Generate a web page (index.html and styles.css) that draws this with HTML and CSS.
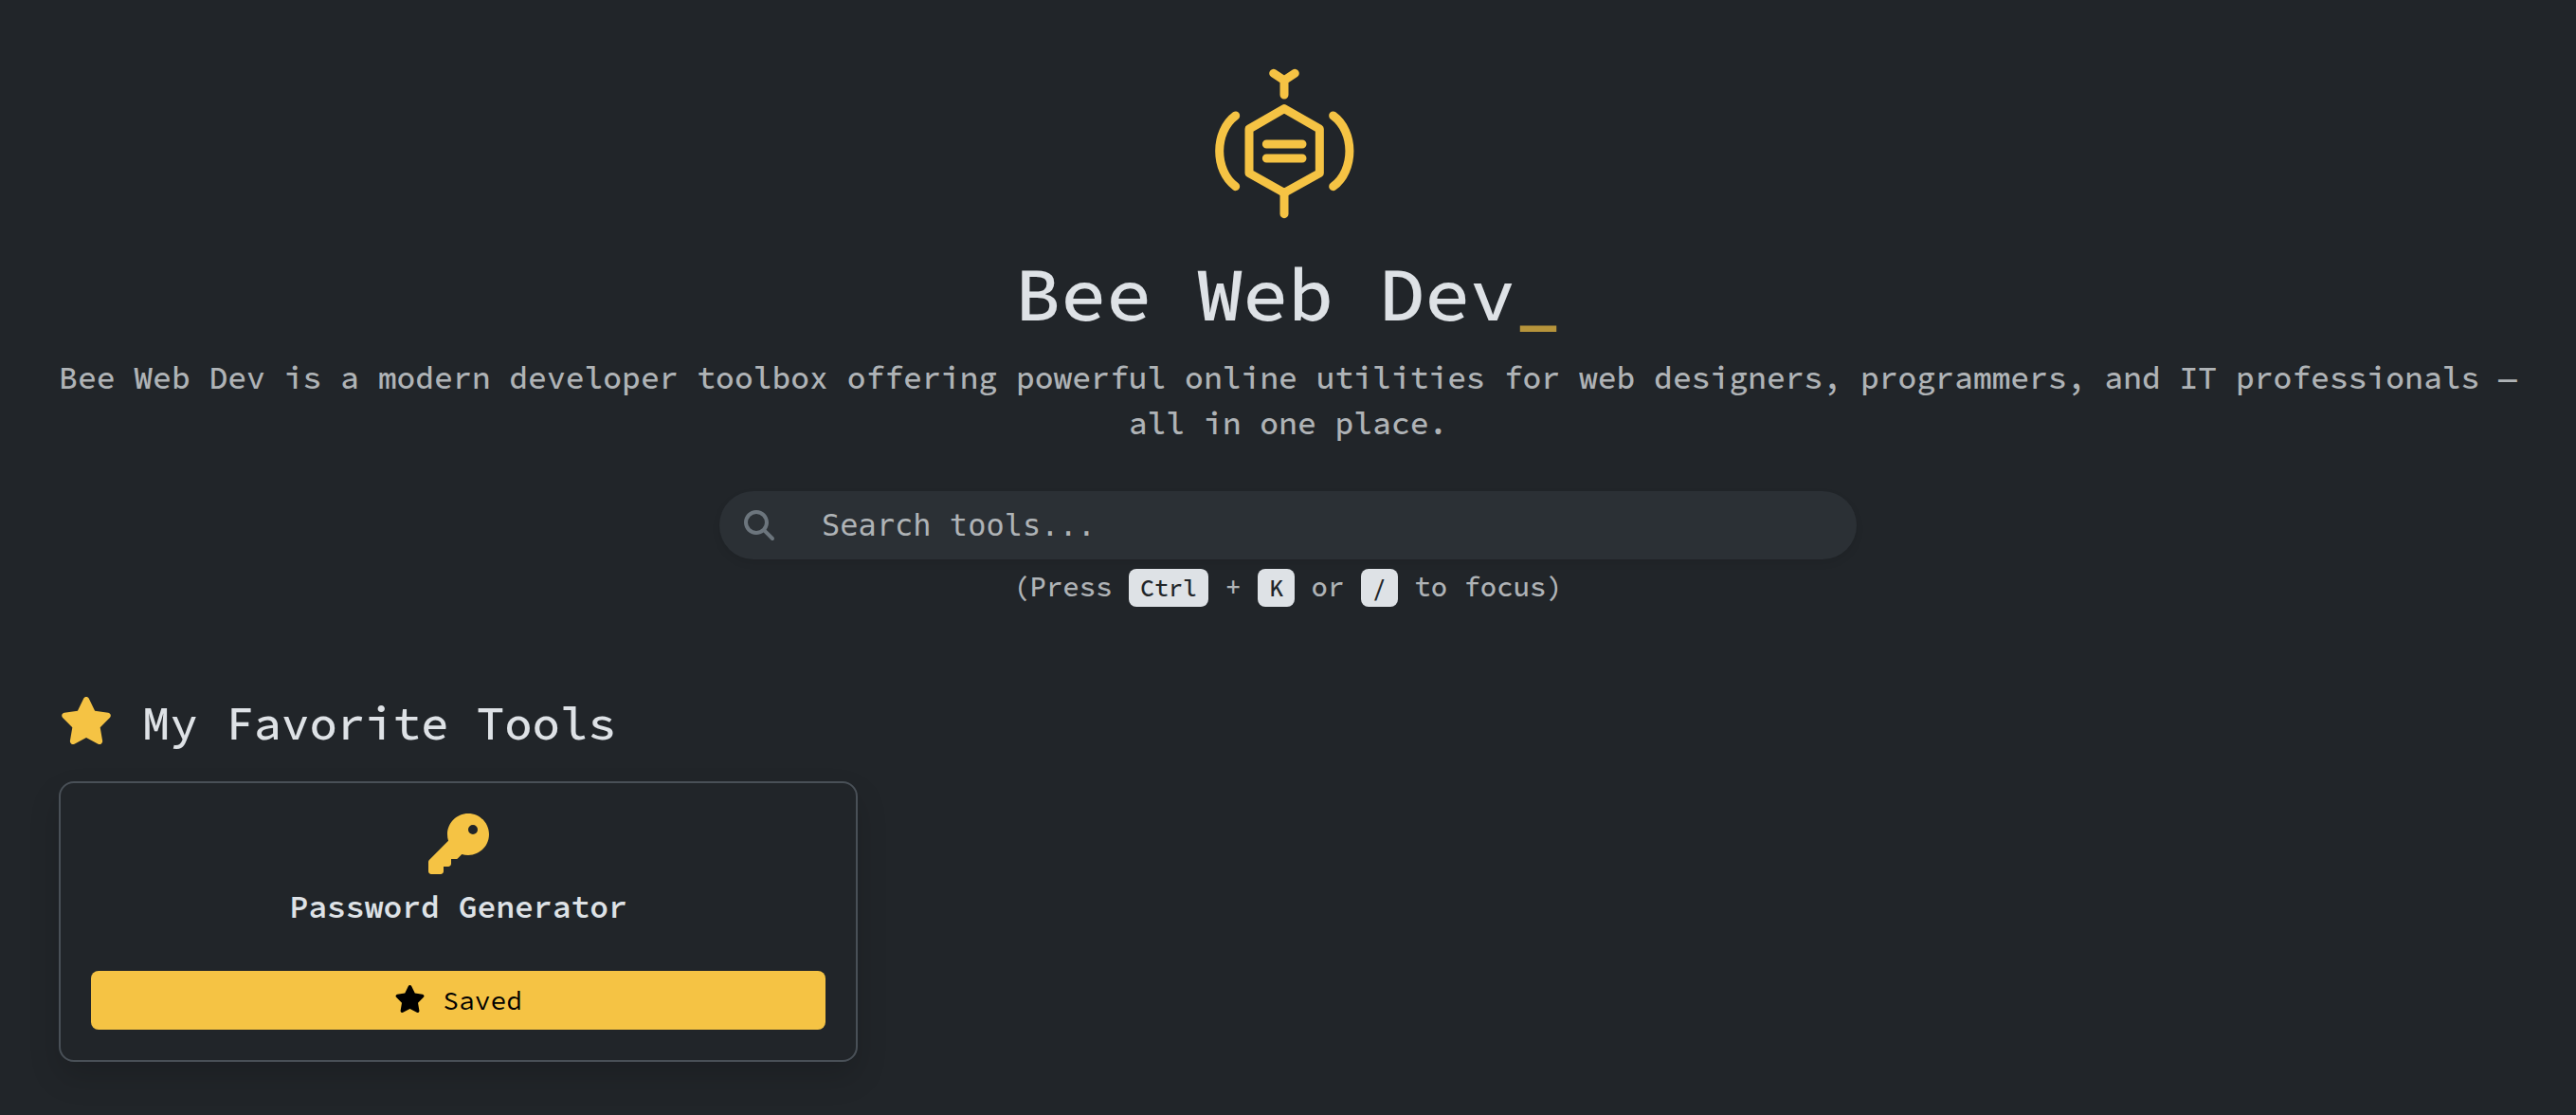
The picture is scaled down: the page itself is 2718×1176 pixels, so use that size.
FILE: index.html
```html
<!DOCTYPE html>
<html lang="en">
<head>
  <meta charset="UTF-8">
  <meta name="viewport" content="width=device-width, initial-scale=1.0">
  <title>Bee Web Dev</title>
  <link rel="stylesheet" href="styles.css">
</head>
<body>
  <!-- Hero (logo, title, search box) -->
  <header class="hero">
    <svg class="logo" viewBox="0 0 600 540" aria-hidden="true">
      <path d="M254 52L288 74L322 52M288 74V120"/>
      <path d="M288 164L400 228V368L288 430L177 368V228Z"/>
      <path d="M288 430V497"/>
      <path d="M232 276H345M232 321H345"/>
      <path d="M134 186C66 236 66 360 134 410"/>
      <path d="M443 186C512 236 512 360 443 410"/>
    </svg>
    <h1 class="title">Bee Web Dev<span class="cursor">_</span></h1>
    <p class="lead">Bee Web Dev is a modern developer toolbox offering powerful online utilities for web designers, programmers, and IT professionals — all in one place.</p>

    <form class="search" role="search">
      <label for="search-box" class="search-icon" aria-label="Search tools">
        <svg viewBox="0 0 512 512" aria-hidden="true">
          <path d="M416 208c0 45.9-14.9 88.3-40 122.7L502.6 457.4c12.5 12.5 12.5 32.8 0 45.3s-32.8 12.5-45.3 0L330.7 376c-34.4 25.2-76.8 40-122.7 40C93.1 416 0 322.9 0 208S93.1 0 208 0S416 93.1 416 208zM208 352a144 144 0 1 0 0-288 144 144 0 1 0 0 288z"/>
        </svg>
      </label>
      <input type="text" id="search-box" placeholder="Search tools...">
    </form>
    <p class="hint">(Press <kbd>Ctrl</kbd> + <kbd>K</kbd> or <kbd>/</kbd> to focus)</p>
  </header>

  <!-- Favorite tools -->
  <main class="container">
    <h2 class="section-title">
      <svg class="star" viewBox="0 0 576 512" aria-hidden="true">
        <path d="M316.9 18C311.6 7 300.4 0 288.1 0s-23.4 7-28.8 18L195 150.3 51.4 171.5c-12 1.8-22 10.2-25.7 21.7s-.7 24.2 7.9 32.7L137.8 329 113.2 474.7c-2 12 3 24.2 12.9 31.3s23 8 33.8 2.3l128.3-68.5 128.3 68.5c10.8 5.7 23.9 4.9 33.8-2.3s14.9-19.3 12.9-31.3L438.5 329 542.7 225.9c8.6-8.5 11.7-21.2 7.9-32.7s-13.7-19.9-25.7-21.7L381.2 150.3 316.9 18z"/>
      </svg>
      My Favorite Tools
    </h2>
    <div class="tools">
      <article class="card">
        <svg class="card-icon" viewBox="0 0 512 512" aria-hidden="true">
          <path d="M336 352c97.2 0 176-78.8 176-176S433.2 0 336 0S160 78.8 160 176c0 18.7 2.9 36.8 8.3 53.7L7 391c-4.5 4.5-7 10.6-7 17v80c0 13.3 10.7 24 24 24h80c13.3 0 24-10.7 24-24V448h40c13.3 0 24-10.7 24-24V384h40c6.4 0 12.5-2.5 17-7l33.3-33.3c16.9 5.4 35 8.3 53.7 8.3zM376 96a40 40 0 1 1 0 80 40 40 0 1 1 0-80z"/>
        </svg>
        <h3 class="card-title">Password Generator</h3>
        <button type="button" class="save-button">
          <svg viewBox="0 0 576 512" aria-hidden="true">
            <path d="M316.9 18C311.6 7 300.4 0 288.1 0s-23.4 7-28.8 18L195 150.3 51.4 171.5c-12 1.8-22 10.2-25.7 21.7s-.7 24.2 7.9 32.7L137.8 329 113.2 474.7c-2 12 3 24.2 12.9 31.3s23 8 33.8 2.3l128.3-68.5 128.3 68.5c10.8 5.7 23.9 4.9 33.8-2.3s14.9-19.3 12.9-31.3L438.5 329 542.7 225.9c8.6-8.5 11.7-21.2 7.9-32.7s-13.7-19.9-25.7-21.7L381.2 150.3 316.9 18z"/>
          </svg>
          Saved
        </button>
      </article>
    </div>
  </main>

  <script>
    const searchBox = document.getElementById('search-box');

    // Ctrl + K or / moves the focus to the search box
    document.addEventListener('keydown', (e) => {
      if ((e.ctrlKey && e.key === 'k') || (e.key === '/' && document.activeElement !== searchBox)) {
        e.preventDefault();
        searchBox.focus();
      }
    });
  </script>
</body>
</html>
```
FILE: styles.css
```css
* {
  box-sizing: border-box;
}

body {
  margin: 0;
  background-color: #212529;
  color: #dee2e6;
  font-family: "Source Code Pro", "Liberation Mono", monospace;
  font-weight: 500;
}

/* Hero */
.hero {
  display: flex;
  flex-direction: column;
  align-items: center;
  padding: 60px 48px 0;
  text-align: center;
}

.logo {
  width: 200px;
  height: 180px;
  margin-bottom: 22px;
  fill: none;
  stroke: #f5c344;
  stroke-width: 27;
  stroke-linecap: round;
  stroke-linejoin: round;
}

.title {
  margin: 0 0 17px;
  font-size: 80px;
  line-height: 96px;
  font-weight: 500;
}

.cursor {
  color: #f5c344;
  opacity: 0.7;
}

.lead {
  margin: 0 0 47px;
  font-size: 33px;
  line-height: 48px;
  color: #afb3b6;
}

/* Search Box */
.search {
  display: flex;
  align-items: center;
  width: 100%;
  max-width: 1200px;
  height: 72px;
  padding: 0 26px;
  gap: 50px;
  background-color: #2b3035;
  border-radius: 36px;
  box-shadow: 0 4px 8px rgba(0, 0, 0, 0.08);
}

.search-icon svg {
  display: block;
  width: 32px;
  height: 32px;
  fill: #6c757d;
}

#search-box {
  flex: 1;
  height: 72px;
  padding: 0;
  border: none;
  outline: none;
  background: none;
  color: #dee2e6;
  font-family: Menlo, "DejaVu Sans Mono", monospace;
  font-size: 32px;
}

#search-box::placeholder {
  color: #afb3b6;
  opacity: 1;
}

.hint {
  margin: 7px 0 0;
  font-size: 29px;
  line-height: 44px;
  color: #afb3b6;
}

kbd {
  padding: 4px 12px;
  border-radius: 8px;
  background-color: #dee2e6;
  color: #212529;
  font-family: inherit;
  font-size: 25px;
}

/* Favorite Tools */
.container {
  padding: 93px 62px 56px;
}

.section-title {
  display: flex;
  align-items: center;
  gap: 30px;
  margin: 0 0 33px;
  font-size: 49px;
  line-height: 56px;
  font-weight: 500;
}

.star {
  width: 58px;
  height: 50px;
  margin-bottom: 6px;
  fill: #f5c344;
}

.tools {
  display: grid;
  grid-template-columns: repeat(3, 1fr);
  gap: 32px;
}

.card {
  display: flex;
  flex-direction: column;
  align-items: center;
  padding: 32px;
  border: 2px solid #495057;
  border-radius: 16px;
  box-shadow: 0 16px 32px rgba(0, 0, 0, 0.15);
}

.card-icon {
  width: 64px;
  height: 64px;
  margin-bottom: 11px;
  fill: #f5c344;
}

.card-title {
  margin: 0 0 43px;
  font-size: 33px;
  line-height: 48px;
  font-weight: 600;
}

.save-button {
  display: flex;
  align-items: center;
  justify-content: center;
  gap: 18px;
  width: 100%;
  height: 62px;
  border: none;
  border-radius: 8px;
  background-color: #f5c344;
  color: #000;
  font-family: inherit;
  font-size: 28px;
  cursor: pointer;
}

.save-button svg {
  width: 33px;
  height: 29px;
  margin-bottom: 4px;
}
```
